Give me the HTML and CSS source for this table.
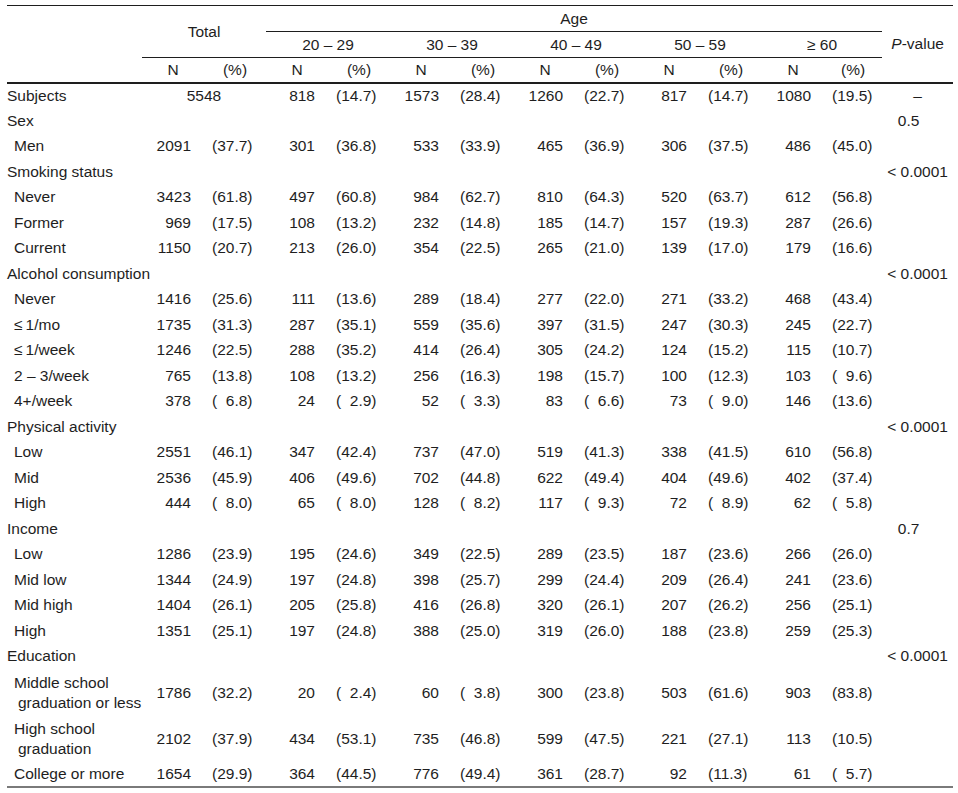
FILE: index.html
```html
<!DOCTYPE html>
<html lang="en">
<head>
<meta charset="utf-8">
<title>Table</title>
<link rel="stylesheet" href="styles.css">
</head>
<body>
<div class="wrap">
<table class="tbl">
  <colgroup>
    <col class="c-label">
    <col class="c-n"><col class="c-p">
    <col class="c-n"><col class="c-p">
    <col class="c-n"><col class="c-p">
    <col class="c-n"><col class="c-p">
    <col class="c-n"><col class="c-p">
    <col class="c-n"><col class="c-p6">
    <col class="c-pv">
  </colgroup>
  <thead>
    <tr class="h1">
      <th rowspan="3" class="blank"></th>
      <th rowspan="2" colspan="2" class="grp">Total</th>
      <th colspan="10" class="age">Age</th>
      <th rowspan="3" class="pvh"><i>P</i>-value</th>
    </tr>
    <tr class="h2">
      <th colspan="2" class="grp">20 – 29</th>
      <th colspan="2" class="grp">30 – 39</th>
      <th colspan="2" class="grp">40 – 49</th>
      <th colspan="2" class="grp">50 – 59</th>
      <th colspan="2" class="grp">≥ 60</th>
    </tr>
    <tr class="h3">
      <th class="nh">N</th><th class="ph">(%)</th>
      <th class="nh">N</th><th class="ph">(%)</th>
      <th class="nh">N</th><th class="ph">(%)</th>
      <th class="nh">N</th><th class="ph">(%)</th>
      <th class="nh">N</th><th class="ph">(%)</th>
      <th class="nh">N</th><th class="ph">(%)</th>
    </tr>
  </thead>
  <tbody>
    <tr class="row">
      <td class="cat">Subjects</td>
      <td colspan="2" class="ctr">5548</td>
      <td class="n">818</td><td class="p">(14.7)</td>
      <td class="n">1573</td><td class="p">(28.4)</td>
      <td class="n">1260</td><td class="p">(22.7)</td>
      <td class="n">817</td><td class="p">(14.7)</td>
      <td class="n">1080</td><td class="p">(19.5)</td>
      <td class="pv">–</td>
    </tr>
    <tr class="row">
      <td class="cat">Sex</td>
      <td></td><td></td><td></td><td></td><td></td><td></td><td></td><td></td><td></td><td></td><td></td><td></td>
      <td class="pv short">0.5</td>
    </tr>
    <tr class="row">
      <td class="sub">Men</td>
      <td class="n">2091</td><td class="p">(37.7)</td>
      <td class="n">301</td><td class="p">(36.8)</td>
      <td class="n">533</td><td class="p">(33.9)</td>
      <td class="n">465</td><td class="p">(36.9)</td>
      <td class="n">306</td><td class="p">(37.5)</td>
      <td class="n">486</td><td class="p">(45.0)</td>
      <td></td>
    </tr>
    <tr class="row">
      <td class="cat">Smoking status</td>
      <td></td><td></td><td></td><td></td><td></td><td></td><td></td><td></td><td></td><td></td><td></td><td></td>
      <td class="pv">&lt; 0.0001</td>
    </tr>
    <tr class="row">
      <td class="sub">Never</td>
      <td class="n">3423</td><td class="p">(61.8)</td>
      <td class="n">497</td><td class="p">(60.8)</td>
      <td class="n">984</td><td class="p">(62.7)</td>
      <td class="n">810</td><td class="p">(64.3)</td>
      <td class="n">520</td><td class="p">(63.7)</td>
      <td class="n">612</td><td class="p">(56.8)</td>
      <td></td>
    </tr>
    <tr class="row">
      <td class="sub">Former</td>
      <td class="n">969</td><td class="p">(17.5)</td>
      <td class="n">108</td><td class="p">(13.2)</td>
      <td class="n">232</td><td class="p">(14.8)</td>
      <td class="n">185</td><td class="p">(14.7)</td>
      <td class="n">157</td><td class="p">(19.3)</td>
      <td class="n">287</td><td class="p">(26.6)</td>
      <td></td>
    </tr>
    <tr class="row">
      <td class="sub">Current</td>
      <td class="n">1150</td><td class="p">(20.7)</td>
      <td class="n">213</td><td class="p">(26.0)</td>
      <td class="n">354</td><td class="p">(22.5)</td>
      <td class="n">265</td><td class="p">(21.0)</td>
      <td class="n">139</td><td class="p">(17.0)</td>
      <td class="n">179</td><td class="p">(16.6)</td>
      <td></td>
    </tr>
    <tr class="row">
      <td class="cat">Alcohol consumption</td>
      <td></td><td></td><td></td><td></td><td></td><td></td><td></td><td></td><td></td><td></td><td></td><td></td>
      <td class="pv">&lt; 0.0001</td>
    </tr>
    <tr class="row">
      <td class="sub">Never</td>
      <td class="n">1416</td><td class="p">(25.6)</td>
      <td class="n">111</td><td class="p">(13.6)</td>
      <td class="n">289</td><td class="p">(18.4)</td>
      <td class="n">277</td><td class="p">(22.0)</td>
      <td class="n">271</td><td class="p">(33.2)</td>
      <td class="n">468</td><td class="p">(43.4)</td>
      <td></td>
    </tr>
    <tr class="row">
      <td class="sub">≤&#8201;1/mo</td>
      <td class="n">1735</td><td class="p">(31.3)</td>
      <td class="n">287</td><td class="p">(35.1)</td>
      <td class="n">559</td><td class="p">(35.6)</td>
      <td class="n">397</td><td class="p">(31.5)</td>
      <td class="n">247</td><td class="p">(30.3)</td>
      <td class="n">245</td><td class="p">(22.7)</td>
      <td></td>
    </tr>
    <tr class="row">
      <td class="sub">≤&#8201;1/week</td>
      <td class="n">1246</td><td class="p">(22.5)</td>
      <td class="n">288</td><td class="p">(35.2)</td>
      <td class="n">414</td><td class="p">(26.4)</td>
      <td class="n">305</td><td class="p">(24.2)</td>
      <td class="n">124</td><td class="p">(15.2)</td>
      <td class="n">115</td><td class="p">(10.7)</td>
      <td></td>
    </tr>
    <tr class="row">
      <td class="sub">2 – 3/week</td>
      <td class="n">765</td><td class="p">(13.8)</td>
      <td class="n">108</td><td class="p">(13.2)</td>
      <td class="n">256</td><td class="p">(16.3)</td>
      <td class="n">198</td><td class="p">(15.7)</td>
      <td class="n">100</td><td class="p">(12.3)</td>
      <td class="n">103</td><td class="p">(&#8199;9.6)</td>
      <td></td>
    </tr>
    <tr class="row">
      <td class="sub">4+/week</td>
      <td class="n">378</td><td class="p">(&#8199;6.8)</td>
      <td class="n">24</td><td class="p">(&#8199;2.9)</td>
      <td class="n">52</td><td class="p">(&#8199;3.3)</td>
      <td class="n">83</td><td class="p">(&#8199;6.6)</td>
      <td class="n">73</td><td class="p">(&#8199;9.0)</td>
      <td class="n">146</td><td class="p">(13.6)</td>
      <td></td>
    </tr>
    <tr class="row">
      <td class="cat">Physical activity</td>
      <td></td><td></td><td></td><td></td><td></td><td></td><td></td><td></td><td></td><td></td><td></td><td></td>
      <td class="pv">&lt; 0.0001</td>
    </tr>
    <tr class="row">
      <td class="sub">Low</td>
      <td class="n">2551</td><td class="p">(46.1)</td>
      <td class="n">347</td><td class="p">(42.4)</td>
      <td class="n">737</td><td class="p">(47.0)</td>
      <td class="n">519</td><td class="p">(41.3)</td>
      <td class="n">338</td><td class="p">(41.5)</td>
      <td class="n">610</td><td class="p">(56.8)</td>
      <td></td>
    </tr>
    <tr class="row">
      <td class="sub">Mid</td>
      <td class="n">2536</td><td class="p">(45.9)</td>
      <td class="n">406</td><td class="p">(49.6)</td>
      <td class="n">702</td><td class="p">(44.8)</td>
      <td class="n">622</td><td class="p">(49.4)</td>
      <td class="n">404</td><td class="p">(49.6)</td>
      <td class="n">402</td><td class="p">(37.4)</td>
      <td></td>
    </tr>
    <tr class="row">
      <td class="sub">High</td>
      <td class="n">444</td><td class="p">(&#8199;8.0)</td>
      <td class="n">65</td><td class="p">(&#8199;8.0)</td>
      <td class="n">128</td><td class="p">(&#8199;8.2)</td>
      <td class="n">117</td><td class="p">(&#8199;9.3)</td>
      <td class="n">72</td><td class="p">(&#8199;8.9)</td>
      <td class="n">62</td><td class="p">(&#8199;5.8)</td>
      <td></td>
    </tr>
    <tr class="row">
      <td class="cat">Income</td>
      <td></td><td></td><td></td><td></td><td></td><td></td><td></td><td></td><td></td><td></td><td></td><td></td>
      <td class="pv short">0.7</td>
    </tr>
    <tr class="row">
      <td class="sub">Low</td>
      <td class="n">1286</td><td class="p">(23.9)</td>
      <td class="n">195</td><td class="p">(24.6)</td>
      <td class="n">349</td><td class="p">(22.5)</td>
      <td class="n">289</td><td class="p">(23.5)</td>
      <td class="n">187</td><td class="p">(23.6)</td>
      <td class="n">266</td><td class="p">(26.0)</td>
      <td></td>
    </tr>
    <tr class="row">
      <td class="sub">Mid low</td>
      <td class="n">1344</td><td class="p">(24.9)</td>
      <td class="n">197</td><td class="p">(24.8)</td>
      <td class="n">398</td><td class="p">(25.7)</td>
      <td class="n">299</td><td class="p">(24.4)</td>
      <td class="n">209</td><td class="p">(26.4)</td>
      <td class="n">241</td><td class="p">(23.6)</td>
      <td></td>
    </tr>
    <tr class="row">
      <td class="sub">Mid high</td>
      <td class="n">1404</td><td class="p">(26.1)</td>
      <td class="n">205</td><td class="p">(25.8)</td>
      <td class="n">416</td><td class="p">(26.8)</td>
      <td class="n">320</td><td class="p">(26.1)</td>
      <td class="n">207</td><td class="p">(26.2)</td>
      <td class="n">256</td><td class="p">(25.1)</td>
      <td></td>
    </tr>
    <tr class="row">
      <td class="sub">High</td>
      <td class="n">1351</td><td class="p">(25.1)</td>
      <td class="n">197</td><td class="p">(24.8)</td>
      <td class="n">388</td><td class="p">(25.0)</td>
      <td class="n">319</td><td class="p">(26.0)</td>
      <td class="n">188</td><td class="p">(23.8)</td>
      <td class="n">259</td><td class="p">(25.3)</td>
      <td></td>
    </tr>
    <tr class="row">
      <td class="cat">Education</td>
      <td></td><td></td><td></td><td></td><td></td><td></td><td></td><td></td><td></td><td></td><td></td><td></td>
      <td class="pv">&lt; 0.0001</td>
    </tr>
    <tr class="row2 r-mid">
      <td class="sub wrapl">Middle school<br>graduation or less</td>
      <td class="n">1786</td><td class="p">(32.2)</td>
      <td class="n">20</td><td class="p">(&#8199;2.4)</td>
      <td class="n">60</td><td class="p">(&#8199;3.8)</td>
      <td class="n">300</td><td class="p">(23.8)</td>
      <td class="n">503</td><td class="p">(61.6)</td>
      <td class="n">903</td><td class="p">(83.8)</td>
      <td></td>
    </tr>
    <tr class="row2 r-high">
      <td class="sub wrapl">High school<br>graduation</td>
      <td class="n">2102</td><td class="p">(37.9)</td>
      <td class="n">434</td><td class="p">(53.1)</td>
      <td class="n">735</td><td class="p">(46.8)</td>
      <td class="n">599</td><td class="p">(47.5)</td>
      <td class="n">221</td><td class="p">(27.1)</td>
      <td class="n">113</td><td class="p">(10.5)</td>
      <td></td>
    </tr>
    <tr class="row last">
      <td class="sub">College or more</td>
      <td class="n">1654</td><td class="p">(29.9)</td>
      <td class="n">364</td><td class="p">(44.5)</td>
      <td class="n">776</td><td class="p">(49.4)</td>
      <td class="n">361</td><td class="p">(28.7)</td>
      <td class="n">92</td><td class="p">(11.3)</td>
      <td class="n">61</td><td class="p">(&#8199;5.7)</td>
      <td></td>
    </tr>
  </tbody>
</table>
</div>
</body>
</html>
```
FILE: styles.css
```css
html, body {
  margin: 0;
  padding: 0;
  background: #ffffff;
}

body {
  font-family: "Liberation Sans", Arial, sans-serif;
  font-size: 15.5px;
  color: #1e1e1e;
}

.wrap {
  padding: 5px 0 0 7px;
}

.tbl {
  border-collapse: collapse;
  table-layout: fixed;
  width: 945px;
}

.c-label { width: 135px; }
.c-n { width: 62px; }
.c-p { width: 62px; }
.c-p6 { width: 58px; }
.c-pv { width: 71px; }

.tbl th,
.tbl td {
  padding: 0;
  font-weight: normal;
  white-space: pre;
  vertical-align: middle;
}

.tbl thead tr.h1 th {
  border-top: 1px solid #1e1e1e;
}

.h1 { height: 26px; }
.h2 { height: 26px; }
.h3 { height: 25px; }

.grp,
.age {
  text-align: center;
}

.age {
  border-bottom: 1px solid #1e1e1e;
  vertical-align: top;
  line-height: 17px;
}

.h1 .grp,
.h2 .grp {
  border-bottom: 1px solid #1e1e1e;
}

.pvh {
  text-align: center;
  padding-top: 6px;
  border-bottom: 2px solid #1e1e1e;
}

.blank {
  border-bottom: 2px solid #1e1e1e;
}

.h3 th {
  border-bottom: 2px solid #1e1e1e;
  text-align: center;
}

.nh { padding-right: 4px; }
.ph { padding-left: 0; }

.row { height: 25.5px; }
.r-mid { height: 47px; }
.r-high { height: 46px; }
.row.last { height: 25px; }

.tbl tbody tr.last td {
  border-bottom: 2px solid #7a7a7a;
}

.cat {
  text-align: left;
}

.sub {
  text-align: left;
  padding-left: 7px !important;
}

.wrapl {
  line-height: 20px;
  padding-left: 11px !important;
  text-indent: -4px;
}

.ctr {
  text-align: center;
}

.n {
  text-align: right;
  padding-right: 13px !important;
}

.p {
  text-align: left;
  padding-left: 8px !important;
}

.pv {
  text-align: center;
}

.pv.short {
  padding-right: 18px !important;
}
```
